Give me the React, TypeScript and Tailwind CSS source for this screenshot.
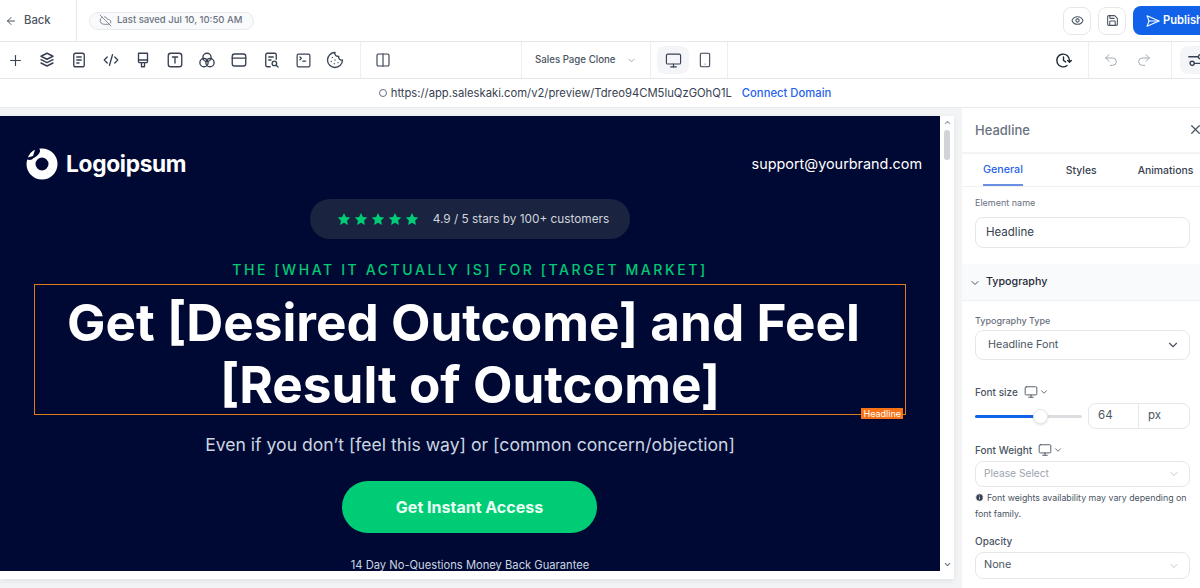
import { ArrowLeft, CloudOff, Eye, Save, Plus, SquareTerminal, Cookie, Columns2, ChevronDown, Monitor, Smartphone, Undo2, Redo2, X, Info } from "lucide-react";
import type { ReactNode } from "react";

const F = { fontFamily: "Inter, 'Noto Sans', sans-serif" };

function Svg({ children, size = 18, sw = 1.8 }: { children: ReactNode; size?: number; sw?: number }) {
  return (
    <svg width={size} height={size} viewBox="0 0 24 24" fill="none" stroke="currentColor" strokeWidth={sw} strokeLinecap="round" strokeLinejoin="round" className="shrink-0">
      {children}
    </svg>
  );
}

function ToolIcon({ children }: { children: ReactNode }) {
  return <div className="w-8 h-9 flex items-center justify-center text-[#374151] shrink-0">{children}</div>;
}

function Labeled({ text, device }: { text: string; device?: boolean }) {
  return (
    <div className="flex items-center gap-[6px] text-[10px] font-medium text-[#4b5563] leading-[14px]">
      <span>{text}</span>
      {device && (
        <span className="flex items-center gap-[1px] text-[#4b5563]">
          <Monitor size={14} strokeWidth={1.6} />
          <ChevronDown size={10} />
        </span>
      )}
    </div>
  );
}

function SelectBox({ text, h, muted, dark }: { text: string; h: string; muted?: boolean; dark?: boolean }) {
  return (
    <div className={`${h} w-[215px] border border-[#e5e7eb] rounded-lg flex items-center justify-between pl-[8px] pr-[9px] bg-white ${muted ? "text-[10.200px] text-[#9ca3af]" : "text-[10.800px] text-[#4b5563]"}`}>
      <span className={dark ? "pl-[4px]" : ""}>{text}</span>
      <ChevronDown size={dark ? 14 : 12} className={dark ? "text-[#4b5563]" : "text-[#c4c8cf]"} />
    </div>
  );
}

function Stars() {
  return (
    <div className="flex gap-[3px] text-[#00cc76] -mt-[2px] ml-[1px]">
      {[0, 1, 2, 3, 4].map((i) => (
        <svg key={i} width="14" height="14" viewBox="0 0 24 24" fill="currentColor">
          <path d="M12 1.500 15.300 8.400 22.800 9.400 17.300 14.600 18.700 22.100 12 18.500 5.300 22.100 6.700 14.600 1.200 9.400 8.700 8.400Z" />
        </svg>
      ))}
    </div>
  );
}

export default function App() {
  return (
    <div className="w-[1200px] h-[588px] overflow-hidden bg-white flex flex-col" style={F}>
      {/* top bar */}
      <div className="h-[42px] shrink-0 border-b border-[#e5e7eb] flex items-center">
        <div className="w-[77px] h-full border-r border-[#e5e7eb] flex items-center pl-[5px] gap-[7px] text-[#4b5563] text-[11.300px] font-medium">
          <ArrowLeft size={12} strokeWidth={2} />
          <span>Back</span>
        </div>
        <div className="ml-3 h-[18px] w-[165px] rounded-full border border-[#e8eaee] bg-[#f9fafb] flex items-center pl-[9px] gap-[5px] text-[9.500px] text-[#6b7280] font-medium">
          <CloudOff size={13} strokeWidth={1.5} />
          <span>Last saved Jul 10, 10:50 AM</span>
        </div>
        <div className="ml-auto flex items-center gap-[7px] shrink-0">
          <div className="w-[28px] h-[28px] rounded-lg border border-[#e5e7eb] flex items-center justify-center text-[#4b5563]">
            <Eye size={13} />
          </div>
          <div className="w-[28px] h-[28px] rounded-lg border border-[#e5e7eb] flex items-center justify-center text-[#4b5563]">
            <Save size={13} />
          </div>
          <div className="w-[67px] h-[29px] rounded-l-lg bg-[#1162e8] flex items-center pl-[12px] gap-[2px] text-white text-[11.200px] font-semibold overflow-hidden">
            <Svg size={16} sw={1.6}>
              <path d="M3 4 21 12 3 20 6 12Z" />
              <path d="M6 12h15" />
            </Svg>
            <span>Publish</span>
          </div>
        </div>
      </div>

      {/* toolbar */}
      <div className="h-[37px] shrink-0 border-b border-[#e5e7eb] flex items-stretch">
        <div className="w-[361px] shrink-0 border-r border-[#eceef1] flex items-center pl-0">
          <div className="flex items-center -ml-[1px]">
            <ToolIcon><Plus size={17} strokeWidth={1.6} /></ToolIcon>
            <ToolIcon>
              <Svg size={18} sw={1.9}>
                <path d="M12 3 4 7l8 4 8-4-8-4Z" />
                <path d="m4 11.500 8 4 8-4" />
                <path d="m4 16 8 4 8-4" />
              </Svg>
            </ToolIcon>
            <ToolIcon>
              <Svg size={18}>
                <rect x="5" y="3" width="14" height="18" rx="2.500" />
                <path d="M9 8h6M9 12h6M9 16h3" />
              </Svg>
            </ToolIcon>
            <ToolIcon><Svg size={18}><path d="m7 8-4 4 4 4M17 8l4 4-4 4M14 5l-4 14" /></Svg></ToolIcon>
            <ToolIcon>
              <Svg size={18}>
                <path d="M6 3h12v9H6z" />
                <path d="M6 12v2a1.500 1.500 0 0 0 1.500 1.500h9A1.500 1.500 0 0 0 18 14v-2" />
                <path d="M10 15.500V21h4v-5.500" />
              </Svg>
            </ToolIcon>
            <ToolIcon>
              <Svg size={18}>
                <rect x="3" y="3" width="18" height="18" rx="3.500" />
                <path d="M8.500 8h7M12 8v8" />
              </Svg>
            </ToolIcon>
            <ToolIcon>
              <Svg size={18}>
                <circle cx="12" cy="8.500" r="5.500" />
                <circle cx="8" cy="15.500" r="5.500" />
                <circle cx="16" cy="15.500" r="5.500" />
              </Svg>
            </ToolIcon>
            <ToolIcon>
              <Svg size={18}>
                <rect x="3" y="4" width="18" height="16" rx="3" />
                <path d="M3 9.500h18" />
              </Svg>
            </ToolIcon>
            <ToolIcon>
              <Svg size={18}>
                <path d="M11 21H7a2 2 0 0 1-2-2V5a2 2 0 0 1 2-2h10a2 2 0 0 1 2 2v6" />
                <path d="M9 8h6M9 12h3" />
                <circle cx="16.500" cy="16.500" r="3" />
                <path d="m19 19 2.500 2.500" />
              </Svg>
            </ToolIcon>
            <ToolIcon><SquareTerminal size={17} strokeWidth={1.7} /></ToolIcon>
            <ToolIcon><Cookie size={18} strokeWidth={1.7} /></ToolIcon>
          </div>
        </div>
        <div className="w-[161px] shrink-0 border-r border-[#eceef1] flex items-center pl-[14px] text-[#374151]">
          <Columns2 size={16} strokeWidth={1.7} />
        </div>
        <div className="w-[129px] shrink-0 border-r border-[#eceef1] flex items-center pl-[13px] pr-[13px] justify-between text-[9.700px] font-medium text-[#4b5563]">
          <span>Sales Page Clone</span>
          <ChevronDown size={11} className="text-[#9ca3af]" />
        </div>
        <div className="w-[77px] shrink-0 border-r border-[#eceef1] flex items-center pl-[6px] text-[#374151]">
          <div className="w-8 h-[28px] rounded-lg bg-[#f3f5f8] flex items-center justify-center"><Monitor size={17} strokeWidth={1.6} /></div>
          <div className="w-8 flex items-center justify-center"><Smartphone size={16} strokeWidth={1.6} /></div>
        </div>
        <div className="flex-1 border-r border-[#eceef1] flex items-center justify-end pr-[16px] text-[#1f2937]">
          <Svg size={17} sw={2}>
            <path d="M20.500 12a9 9 0 1 0-3.500 7.100" />
            <path d="M12 7v5l3 2" />
            <path d="m18 12 2.500 2.500L23 12" />
          </Svg>
        </div>
        <div className="w-[83px] shrink-0 border-r border-[#eceef1] flex items-center pl-[14px] gap-[17px] text-[#9ca3af]">
          <Undo2 size={16} strokeWidth={1.4} />
          <Redo2 size={16} strokeWidth={1.4} />
        </div>
        <div className="w-[28px] shrink-0 flex items-center pl-[8px] overflow-hidden">
          <div className="w-[40px] h-[28px] rounded-lg bg-[#f3f5f8] shrink-0 flex items-center pl-[8px] text-[#374151]">
            <Svg size={20} sw={1.7}>
              <circle cx="5" cy="16" r="2.500" />
              <circle cx="15" cy="8" r="2.500" />
              <path d="M1 8h11M8 16h14" />
            </Svg>
          </div>
        </div>
      </div>

      {/* url bar */}
      <div className="h-[29px] shrink-0 border-b border-[#e8eaed] flex items-center justify-center pl-[10px] text-[11.250px] text-[#374151]">
        <span className="w-[8px] h-[8px] rounded-full border border-[#6b7280] mr-[4px]" />
        <span>https://app.saleskaki.com/v2/preview/Tdreo94CM5luQzGOhQ1L</span>
        <span className="ml-[10px] text-[#2563eb] font-medium">Connect Domain</span>
      </div>

      {/* workspace */}
      <div className="flex-1 min-h-0 flex bg-[#f3f4f6]">
        <div className="w-[962px] shrink-0 pt-[8px]">
          <div className="w-[954px] h-[463px] bg-white flex shadow-[0_2px_6px_rgba(0,0,0,0.08)]">
            <div className="w-[940px] h-[455px] bg-[#000933] overflow-hidden flex flex-col items-center shrink-0 text-white relative">
              <div className="w-full h-[84px] shrink-0 px-[18px] flex items-center justify-between pt-[12px]">
                <div className="flex items-center gap-[8px] ml-[8px]">
                  <svg width="32" height="32" viewBox="0 0 32 32">
                    <path fill="#fff" fillRule="evenodd" d="M16 0.500A15.500 15.500 0 1 1 0.500 16c0-1.500 0.300-3.200 0.800-4.600 2.200 1 5 .4 6.300-1.400C9.500 9.300 13 6.500 13.800 4c.5-1.400.2-2.500-.6-3.300.9-.1 1.800-.2 2.800-.2ZM16 9.500a6.500 6.500 0 1 0 0 13 6.500 6.500 0 0 0 0-13Z" />
                    <path fill="#fff" d="M9 1.800 7 8 1.800 9.500C3.300 5.800 5.800 3.300 9 1.800Z" />
                  </svg>
                  <span className="text-[22.700px] font-bold tracking-[-0.3px] leading-none">Logoipsum</span>
                </div>
                <span className="text-[14.400px] text-white">support@yourbrand.com</span>
              </div>
              <div className="w-[320px] h-[40px] shrink-0 mt-[-1px] rounded-full bg-[#1a2340] flex items-center justify-center gap-[14px] pl-[5px] pt-[1px] text-[11.800px] text-[#d1d5db]">
                <Stars />
                <span>4.9 / 5 stars by 100+ customers</span>
              </div>
              <div className="mt-[22px] text-[14px] font-medium tracking-[2.600px] text-[#00c974] leading-[18px] shrink-0">THE [WHAT IT ACTUALLY IS] FOR [TARGET MARKET]</div>
              <div className="mt-[5px] w-[872px] h-[131px] shrink-0 border border-[#e07b1a] relative flex items-center justify-center">
                <h1 className="text-[51.250px] leading-[62px] font-bold text-center text-white w-[860px] pt-[6px]">
                  <span className="block pr-[13px]">Get [Desired Outcome] and Feel</span>
                  <span className="block">[Result of Outcome]</span>
                </h1>
                <span className="absolute right-[2px] bottom-[-5px] bg-[#f97316] text-white text-[9px] leading-[11px] px-[2px] h-[11px]">Headline</span>
              </div>
              <div className="mt-[18px] text-[17.600px] leading-[24px] text-[#cbd5e1] shrink-0">Even if you don’t [feel this way] or [common concern/objection]</div>
              <div className="mt-[25px] w-[255px] h-[52px] shrink-0 rounded-full bg-[#00cc76] flex items-center justify-center text-[16px] font-bold text-[#eafff4] pl-[1px] -translate-x-[1px] -translate-y-[1px]">Get Instant Access</div>
              <div className="mt-[23px] text-[11.200px] leading-[16px] text-[#cbd5e1] shrink-0">14 Day No-Questions Money Back Guarantee</div>
            </div>
            <div className="w-[14px] h-[455px] flex flex-col items-center justify-between text-[#9ca3af] pt-[2px] pb-[2px]">
              <ChevronDown size={9} strokeWidth={3} className="rotate-180" />
              <div className="w-[6px] h-[30px] rounded-full bg-[#d0d4d8] mt-[3px] mb-auto" />
              <ChevronDown size={9} strokeWidth={3} className="text-[#6b7280]" />
            </div>
          </div>
        </div>

        {/* right panel */}
        <div className="w-[270px] shrink-0 bg-white flex flex-col">
          <div className="h-[46px] shrink-0 flex items-center pl-[13px] pt-[1px] border-b-2 border-[#f3f4f6] text-[#6b7280] text-[13px] font-medium relative">
            <span>Headline</span>
            <X size={15} className="absolute left-[226px] top-[14px] text-[#4b5563]" />
          </div>
          <div className="h-[33px] shrink-0 border-b border-[#f0f1f3] flex items-stretch text-[10.400px] font-medium text-[#374151] pl-[21px]">
            <span className="h-full flex items-center border-b-2 border-[#6b8fe0] text-[#2563eb] text-[10.700px] pt-[3px]">General</span>
            <span className="flex items-center ml-[43px] pt-[2px]">Styles</span>
            <span className="flex items-center ml-[41px] pt-[2px]">Animations</span>
          </div>
          <div className="pl-[13px] pt-[10px] text-[9px] leading-[12px] text-[#6b7280]">Element name</div>
          <div className="ml-[13px] mt-[8px] w-[215px] h-[31px] shrink-0 border border-[#e5e7eb] rounded-lg flex items-center pl-[10px] text-[11.500px] text-[#374151]">Headline</div>
          <div className="mt-[16px] h-[37px] shrink-0 bg-[#f8fafc] border-b border-[#f0f1f3] flex items-center pl-[7px] pt-[1px] gap-[5px] text-[10.700px] font-medium text-[#1f2937]">
            <ChevronDown size={12} className="text-[#4b5563]" />
            <span>Typography</span>
          </div>
          <div className="pl-[13px] flex flex-col items-start">
            <div className="mt-[14px] text-[9px] leading-[12px] font-medium text-[#6b7280]">Typography Type</div>
            <div className="mt-[3px]"><SelectBox text="Headline Font" h="h-[30px]" dark /></div>
            <div className="mt-[25px]"><Labeled text="Font size" device /></div>
            <div className="mt-[4px] w-[215px] flex items-center">
              <div className="w-[107px] h-[3px] rounded-full bg-[#dcdde0] relative shrink-0">
                <div className="w-[66px] h-[3px] rounded-full bg-[#1162e8]" />
                <div className="absolute left-[58px] top-[-6px] w-[15px] h-[15px] rounded-full bg-white border border-[#e5e7eb] shadow-sm" />
              </div>
              <div className="ml-[6px] w-[102px] h-[26px] border border-[#e5e7eb] rounded-lg flex items-stretch text-[11.500px] text-[#4b5563]">
                <span className="w-[50px] border-r border-[#e5e7eb] flex items-center pl-[9px]">64</span>
                <span className="flex items-center pl-[9px]">px</span>
              </div>
            </div>
            <div className="mt-[14px]"><Labeled text="Font Weight" device /></div>
            <div className="mt-[4px]"><SelectBox text="Please Select" h="h-[26px]" muted /></div>
            <div className="mt-[3px] w-[215px] text-[8.800px] leading-[16px] text-[#4b5563]">
              <Info size={9} fill="#374151" stroke="#fff" className="inline align-[-1px] mr-[3px]" />
              Font weights availability may vary depending on font family.
            </div>
            <div className="mt-[12px]"><Labeled text="Opacity" /></div>
            <div className="mt-[4px]"><SelectBox text="None" h="h-[27px]" /></div>
          </div>
        </div>
      </div>
    </div>
  );
}
